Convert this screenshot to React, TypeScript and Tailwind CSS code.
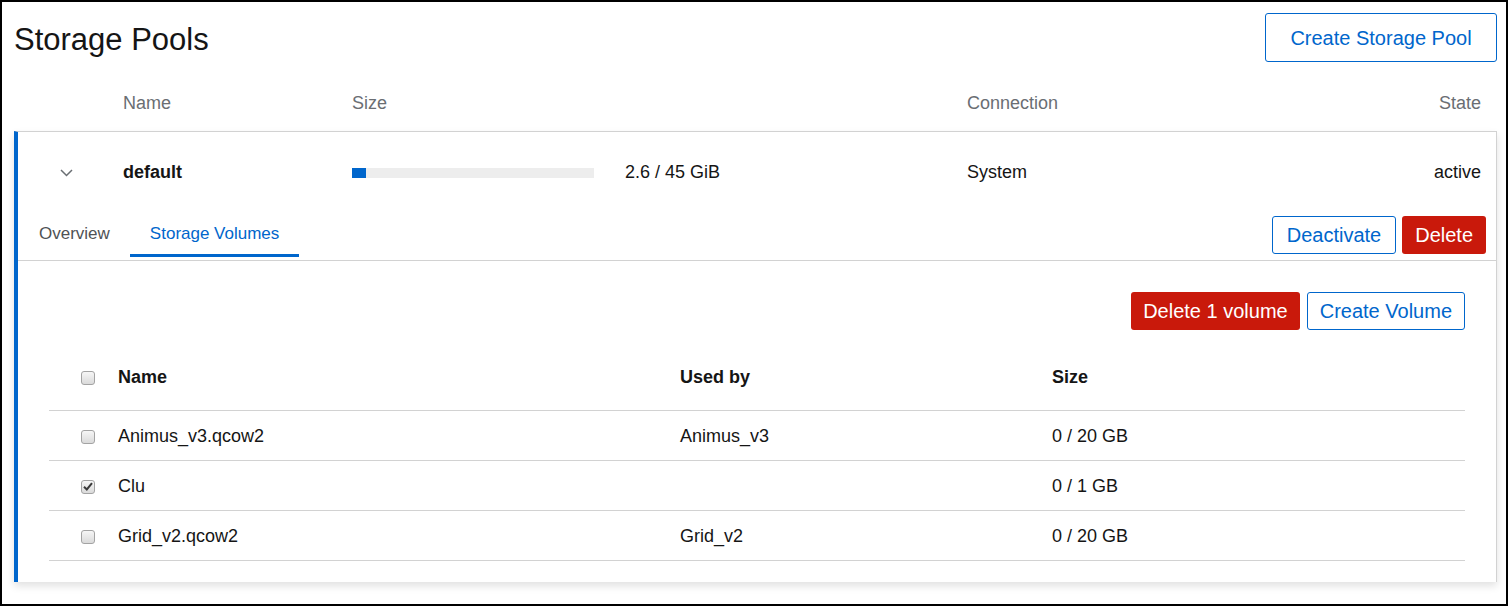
import React from "react";

const font = "font-['Liberation_Sans',Arial,sans-serif]";

type Volume = { name: string; usedBy: string; size: string; checked: boolean };

const volumes: Volume[] = [
    { name: "Animus_v3.qcow2", usedBy: "Animus_v3", size: "0 / 20 GB", checked: false },
    { name: "Clu", usedBy: "", size: "0 / 1 GB", checked: true },
    { name: "Grid_v2.qcow2", usedBy: "Grid_v2", size: "0 / 20 GB", checked: false },
];

function Checkbox({ checked }: { checked?: boolean }) {
    return (
        <span className="flex h-[14px] w-[14px] items-center justify-center rounded-[3px] border border-[#a3a3a3] bg-gradient-to-b from-[#f6f6f6] to-[#dadada]">
            {checked && (
                <svg width="10" height="9" viewBox="0 0 10 9">
                    <path d="M1 4.8 L3.8 7.5 L9 1.2" fill="none" stroke="#3a3a3a" strokeWidth="2" />
                </svg>
            )}
        </span>
    );
}

export default function App() {
    return (
        <div className={`${font} box-border h-[606px] w-[1508px] border-2 border-black bg-white pl-[12px] pr-[9px] pt-[11px] text-[#151515]`}>
            {/* page header */}
            <div className="flex h-[49px] items-center justify-between">
                <h1 className="pt-[3px] text-[31px] leading-none">Storage Pools</h1>
                <button className="h-[49px] w-[232px] rounded-[3px] border border-[#0066cc] text-[20px] text-[#0066cc]">
                    Create Storage Pool
                </button>
            </div>

            {/* column headers */}
            <div className="grid h-[69px] grid-cols-[109px_229px_615px_1fr_auto] items-center pr-[16px] pt-[13px] text-[18px] text-[#6a6e73]">
                <span />
                <span>Name</span>
                <span>Size</span>
                <span>Connection</span>
                <span>State</span>
            </div>

            {/* expanded pool */}
            <div className="border-l-4 border-t border-r border-l-[#0066cc] border-t-[#d2d2d2] border-r-[#d2d2d2] shadow-[0_4px_8px_rgba(0,0,0,0.12)]">
                <div className="grid h-[79px] grid-cols-[105px_229px_615px_1fr_auto] items-center pr-[15px] pt-[2px] text-[18px]">
                    <span className="pl-[42px]">
                        <svg width="13" height="8" viewBox="0 0 13 8" className="block">
                            <path d="M1 1 L6.5 6.5 L12 1" fill="none" stroke="#6a6e73" strokeWidth="1.5" />
                        </svg>
                    </span>
                    <span className="font-bold">default</span>
                    <span className="flex items-center gap-[31px]">
                        <span className="flex h-[10px] w-[242px] bg-[#ededed]">
                            <span className="h-full w-[14px] bg-[#0066cc]" />
                        </span>
                        <span>2.6 / 45 GiB</span>
                    </span>
                    <span>System</span>
                    <span>active</span>
                </div>

                <div className="flex h-[50px] items-start justify-between border-b border-[#d2d2d2] pr-[10px]">
                    <div className="ml-[1px] flex">
                        <div className="flex h-[46px] items-center border-b-[3px] border-transparent px-[20px] pt-[2px] text-[17px] text-[#4f5255]">
                            Overview
                        </div>
                        <div className="flex h-[46px] items-center border-b-[3px] border-[#0066cc] px-[20px] pt-[2px] text-[17px] text-[#0066cc]">
                            Storage Volumes
                        </div>
                    </div>
                    <div className="flex gap-[6px] pt-[5px]">
                        <button className="h-[38px] rounded-[3px] border border-[#0066cc] px-[14px] text-[20px] text-[#0066cc]">
                            Deactivate
                        </button>
                        <button className="h-[38px] rounded-[3px] bg-[#c9190b] px-[13px] text-[20px] text-white">
                            Delete
                        </button>
                    </div>
                </div>

                <div className="px-[31px] pb-[21px] pt-[31px]">
                    <div className="flex justify-end gap-[7px]">
                        <button className="h-[38px] rounded-[3px] bg-[#c9190b] px-[12px] text-[20px] text-white">
                            Delete 1 volume
                        </button>
                        <button className="h-[38px] rounded-[3px] border border-[#0066cc] px-[12px] text-[20px] text-[#0066cc]">
                            Create Volume
                        </button>
                    </div>

                    <div className="mt-[14px] text-[18px]">
                        <div className="grid h-[67px] grid-cols-[69px_562px_372px_1fr] items-center border-b border-[#d2d2d2] pt-[1px] font-bold">
                            <span className="pl-[32px]">
                                <Checkbox />
                            </span>
                            <span>Name</span>
                            <span>Used by</span>
                            <span>Size</span>
                        </div>
                        {volumes.map((v) => (
                            <div
                                key={v.name}
                                className="grid h-[50px] grid-cols-[69px_562px_372px_1fr] items-center border-b border-[#d2d2d2] pt-[2px]"
                            >
                                <span className="pl-[32px]">
                                    <Checkbox checked={v.checked} />
                                </span>
                                <span>{v.name}</span>
                                <span>{v.usedBy}</span>
                                <span>{v.size}</span>
                            </div>
                        ))}
                    </div>
                </div>
            </div>
        </div>
    );
}
